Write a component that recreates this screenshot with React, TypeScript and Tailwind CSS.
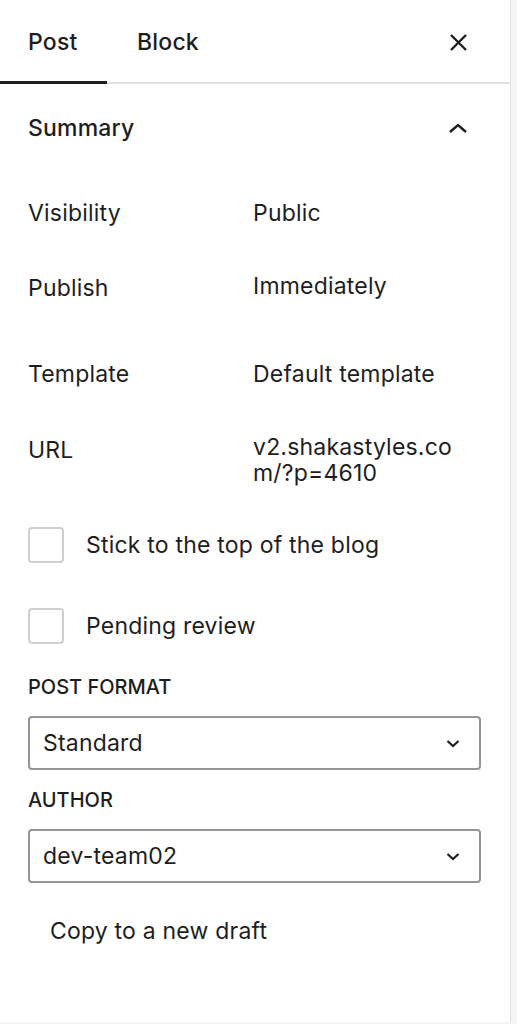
import { useState } from "react";

const FONT = "font-['Inter','Noto_Sans',sans-serif]";

function ChevronDown() {
  return (
    <svg width="14" height="9" viewBox="0 0 14 9" fill="none" className="text-[#1e1e1e]">
      <path d="M1.5 2l5.5 5 5.5-5" stroke="currentColor" strokeWidth="2.2" />
    </svg>
  );
}

function Row({ label, children, valueClass = "" }: { label: string; children: React.ReactNode; valueClass?: string }) {
  return (
    <div className="flex items-start">
      <span className="w-[225px] shrink-0">{label}</span>
      <span className={valueClass}>{children}</span>
    </div>
  );
}

function Checkbox({ label }: { label: string }) {
  const [on, setOn] = useState(false);
  return (
    <label className="flex items-center gap-[22px] cursor-pointer">
      <span
        onClick={() => setOn(!on)}
        className="w-[36px] h-[36px] rounded-[4px] border-2 border-[#cfcfcf] bg-white shrink-0"
      />
      <span>{label}</span>
    </label>
  );
}

function SelectBox({ value }: { value: string }) {
  return (
    <div className="h-[54px] w-[453px] flex items-center justify-between pl-[13px] pr-[19px] border-2 border-[#949494] rounded-[4px] bg-white">
      <span>{value}</span>
      <ChevronDown />
    </div>
  );
}

export default function App() {
  const [tab, setTab] = useState("post");
  return (
    <div className={`min-h-screen bg-[#f5f5f5] ${FONT} text-[#1e1e1e] text-[23px] leading-[26px] tracking-[0.2px]`}>
      <div className="w-[511px] h-[1022px] bg-white border-r border-[#e2e2e2]">
        {/* tabs */}
        <div className="h-[84px] flex items-stretch shadow-[inset_0_-2px_0_#e0e0e0]">
          <button
            onClick={() => setTab("post")}
            className={`w-[107px] pl-[28px] text-left font-medium ${tab === "post" ? "shadow-[inset_0_-3px_0_#1e1e1e]" : ""}`}
          >
            Post
          </button>
          <button
            onClick={() => setTab("block")}
            className={`pl-[30px] pr-[20px] text-left font-medium ${tab === "block" ? "shadow-[inset_0_-3px_0_#1e1e1e]" : ""}`}
          >
            Block
          </button>
          <div className="flex-1" />
          <button className="w-[88px] flex items-center justify-center pr-[15px]">
            <svg width="19" height="19" viewBox="0 0 19 19" fill="none">
              <path d="M2 2l15 15M17 2L2 17" stroke="#1e1e1e" strokeWidth="2.4" />
            </svg>
          </button>
        </div>

        <div className="pl-[28px] pr-[30px]">
          {/* summary header */}
          <div className="pt-[31px] flex items-center justify-between pr-[12px]">
            <span className="font-medium">Summary</span>
            <svg width="20" height="12" viewBox="0 0 20 12" fill="none">
              <path d="M2 10l8-7 8 7" stroke="#1e1e1e" strokeWidth="2.4" />
            </svg>
          </div>

          <div className="mt-[59px]">
            <Row label="Visibility">Public</Row>
          </div>
          <div className="mt-[49px]">
            <Row label="Publish" valueClass="-mt-[2px]">Immediately</Row>
          </div>
          <div className="mt-[60px]">
            <Row label="Template">Default template</Row>
          </div>
          <div className="mt-[50px]">
            <Row label="URL" valueClass="-mt-[3px]">
              v2.shakastyles.co
              <br />
              m/?p=4610
            </Row>
          </div>

          <div className="mt-[41px]">
            <Checkbox label="Stick to the top of the blog" />
          </div>
          <div className="mt-[45px]">
            <Checkbox label="Pending review" />
          </div>

          <div className="mt-[32px] text-[20px] leading-[22px] font-medium uppercase tracking-normal">Post format</div>
          <div className="mt-[18px]">
            <SelectBox value="Standard" />
          </div>
          <div className="mt-[19px] text-[20px] leading-[22px] font-medium uppercase tracking-normal">Author</div>
          <div className="mt-[18px]">
            <SelectBox value="dev-team02" />
          </div>

          <div className="mt-[35px] pl-[22px]">Copy to a new draft</div>
        </div>
      </div>
    </div>
  );
}
